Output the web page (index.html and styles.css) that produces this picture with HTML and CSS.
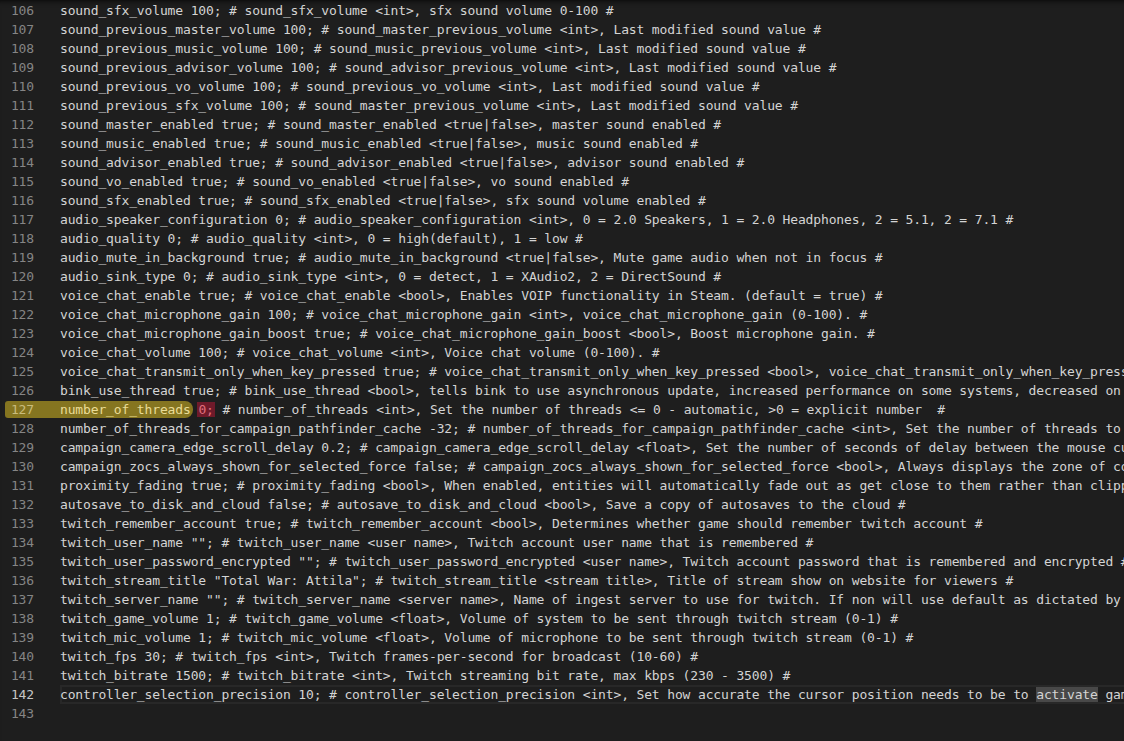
FILE: index.html
```html
<!DOCTYPE html>
<html>
<head>
<meta charset="utf-8">
<link rel="stylesheet" href="styles.css">
</head>
<body>
<div class="editor">
  <div class="row"><span class="ln">106</span><span class="code">sound_sfx_volume 100; # sound_sfx_volume &lt;int&gt;, sfx sound volume 0-100 #</span></div>
  <div class="row"><span class="ln">107</span><span class="code">sound_previous_master_volume 100; # sound_master_previous_volume &lt;int&gt;, Last modified sound value #</span></div>
  <div class="row"><span class="ln">108</span><span class="code">sound_previous_music_volume 100; # sound_music_previous_volume &lt;int&gt;, Last modified sound value #</span></div>
  <div class="row"><span class="ln">109</span><span class="code">sound_previous_advisor_volume 100; # sound_advisor_previous_volume &lt;int&gt;, Last modified sound value #</span></div>
  <div class="row"><span class="ln">110</span><span class="code">sound_previous_vo_volume 100; # sound_previous_vo_volume &lt;int&gt;, Last modified sound value #</span></div>
  <div class="row"><span class="ln">111</span><span class="code">sound_previous_sfx_volume 100; # sound_master_previous_volume &lt;int&gt;, Last modified sound value #</span></div>
  <div class="row"><span class="ln">112</span><span class="code">sound_master_enabled true; # sound_master_enabled &lt;true|false&gt;, master sound enabled #</span></div>
  <div class="row"><span class="ln">113</span><span class="code">sound_music_enabled true; # sound_music_enabled &lt;true|false&gt;, music sound enabled #</span></div>
  <div class="row"><span class="ln">114</span><span class="code">sound_advisor_enabled true; # sound_advisor_enabled &lt;true|false&gt;, advisor sound enabled #</span></div>
  <div class="row"><span class="ln">115</span><span class="code">sound_vo_enabled true; # sound_vo_enabled &lt;true|false&gt;, vo sound enabled #</span></div>
  <div class="row"><span class="ln">116</span><span class="code">sound_sfx_enabled true; # sound_sfx_enabled &lt;true|false&gt;, sfx sound volume enabled #</span></div>
  <div class="row"><span class="ln">117</span><span class="code">audio_speaker_configuration 0; # audio_speaker_configuration &lt;int&gt;, 0 = 2.0 Speakers, 1 = 2.0 Headphones, 2 = 5.1, 2 = 7.1 #</span></div>
  <div class="row"><span class="ln">118</span><span class="code">audio_quality 0; # audio_quality &lt;int&gt;, 0 = high(default), 1 = low #</span></div>
  <div class="row"><span class="ln">119</span><span class="code">audio_mute_in_background true; # audio_mute_in_background &lt;true|false&gt;, Mute game audio when not in focus #</span></div>
  <div class="row"><span class="ln">120</span><span class="code">audio_sink_type 0; # audio_sink_type &lt;int&gt;, 0 = detect, 1 = XAudio2, 2 = DirectSound #</span></div>
  <div class="row"><span class="ln">121</span><span class="code">voice_chat_enable true; # voice_chat_enable &lt;bool&gt;, Enables VOIP functionality in Steam. (default = true) #</span></div>
  <div class="row"><span class="ln">122</span><span class="code">voice_chat_microphone_gain 100; # voice_chat_microphone_gain &lt;int&gt;, voice_chat_microphone_gain (0-100). #</span></div>
  <div class="row"><span class="ln">123</span><span class="code">voice_chat_microphone_gain_boost true; # voice_chat_microphone_gain_boost &lt;bool&gt;, Boost microphone gain. #</span></div>
  <div class="row"><span class="ln">124</span><span class="code">voice_chat_volume 100; # voice_chat_volume &lt;int&gt;, Voice chat volume (0-100). #</span></div>
  <div class="row"><span class="ln">125</span><span class="code">voice_chat_transmit_only_when_key_pressed true; # voice_chat_transmit_only_when_key_pressed &lt;bool&gt;, voice_chat_transmit_only_when_key_pressed #</span></div>
  <div class="row"><span class="ln">126</span><span class="code">bink_use_thread true; # bink_use_thread &lt;bool&gt;, tells bink to use asynchronous update, increased performance on some systems, decreased on others #</span></div>
  <div class="row marked"><span class="brush"></span><span class="ln">127</span><span class="code"><span class="hl">number_of_threads</span> <span class="err">0;</span> # number_of_threads &lt;int&gt;, Set the number of threads &lt;= 0 - automatic, &gt;0 = explicit number  #</span></div>
  <div class="row"><span class="ln">128</span><span class="code">number_of_threads_for_campaign_pathfinder_cache -32; # number_of_threads_for_campaign_pathfinder_cache &lt;int&gt;, Set the number of threads to use #</span></div>
  <div class="row"><span class="ln">129</span><span class="code">campaign_camera_edge_scroll_delay 0.2; # campaign_camera_edge_scroll_delay &lt;float&gt;, Set the number of seconds of delay between the mouse cursor #</span></div>
  <div class="row"><span class="ln">130</span><span class="code">campaign_zocs_always_shown_for_selected_force false; # campaign_zocs_always_shown_for_selected_force &lt;bool&gt;, Always displays the zone of control #</span></div>
  <div class="row"><span class="ln">131</span><span class="code">proximity_fading true; # proximity_fading &lt;bool&gt;, When enabled, entities will automatically fade out as get close to them rather than clipping #</span></div>
  <div class="row"><span class="ln">132</span><span class="code">autosave_to_disk_and_cloud false; # autosave_to_disk_and_cloud &lt;bool&gt;, Save a copy of autosaves to the cloud #</span></div>
  <div class="row"><span class="ln">133</span><span class="code">twitch_remember_account true; # twitch_remember_account &lt;bool&gt;, Determines whether game should remember twitch account #</span></div>
  <div class="row"><span class="ln">134</span><span class="code">twitch_user_name ""; # twitch_user_name &lt;user name&gt;, Twitch account user name that is remembered #</span></div>
  <div class="row"><span class="ln">135</span><span class="code">twitch_user_password_encrypted ""; # twitch_user_password_encrypted &lt;user name&gt;, Twitch account password that is remembered and encrypted #</span></div>
  <div class="row"><span class="ln">136</span><span class="code">twitch_stream_title "Total War: Attila"; # twitch_stream_title &lt;stream title&gt;, Title of stream show on website for viewers #</span></div>
  <div class="row"><span class="ln">137</span><span class="code">twitch_server_name ""; # twitch_server_name &lt;server name&gt;, Name of ingest server to use for twitch. If non will use default as dictated by twitch #</span></div>
  <div class="row"><span class="ln">138</span><span class="code">twitch_game_volume 1; # twitch_game_volume &lt;float&gt;, Volume of system to be sent through twitch stream (0-1) #</span></div>
  <div class="row"><span class="ln">139</span><span class="code">twitch_mic_volume 1; # twitch_mic_volume &lt;float&gt;, Volume of microphone to be sent through twitch stream (0-1) #</span></div>
  <div class="row"><span class="ln">140</span><span class="code">twitch_fps 30; # twitch_fps &lt;int&gt;, Twitch frames-per-second for broadcast (10-60) #</span></div>
  <div class="row"><span class="ln">141</span><span class="code">twitch_bitrate 1500; # twitch_bitrate &lt;int&gt;, Twitch streaming bit rate, max kbps (230 - 3500) #</span></div>
  <div class="row current"><span class="ln">142</span><span class="code">controller_selection_precision 10; # controller_selection_precision &lt;int&gt;, Set how accurate the cursor position needs to be to <span class="word">activate</span> game items #</span></div>
  <div class="row"><span class="ln">143</span><span class="code"></span></div>
</div>
</body>
</html>
```
FILE: styles.css
```css
html, body {
  margin: 0;
  padding: 0;
  background: #1e1e1e;
}

.editor {
  width: 1124px;
  height: 741px;
  overflow: hidden;
  background: #1e1e1e;
  padding-top: 1px;
  box-sizing: border-box;
  box-shadow: inset 0 6px 6px -6px #000;
  font-family: "DejaVu Sans Mono", "Liberation Mono", monospace;
  font-size: 13px;
  letter-spacing: -0.14px;
  color: #d4d4d4;
}

.row {
  position: relative;
  display: flex;
  height: 19px;
  line-height: 19px;
  white-space: pre;
}

.ln {
  width: 34px;
  flex: none;
  text-align: right;
  color: #858585;
  position: relative;
  z-index: 1;
}

.code {
  flex: 1;
  margin-left: 26px;
  position: relative;
  z-index: 1;
}

.marked .brush {
  position: absolute;
  left: 5px;
  top: 1px;
  width: 188px;
  height: 17px;
  background: #857520;
  border-radius: 3px 8px 8px 3px;
  z-index: 0;
}

.marked .ln {
  color: #c9bc7c;
}

.hl {
  color: #eadc96;
}

.err {
  background: #6f1a2a;
  color: #e0707e;
  padding: 0 1px;
  margin-left: -1px;
}

.current .ln {
  color: #c6c6c6;
}

.current .code {
  box-shadow: inset 0 0 0 2px #282828;
}

.word {
  background: #484848;
}
```
